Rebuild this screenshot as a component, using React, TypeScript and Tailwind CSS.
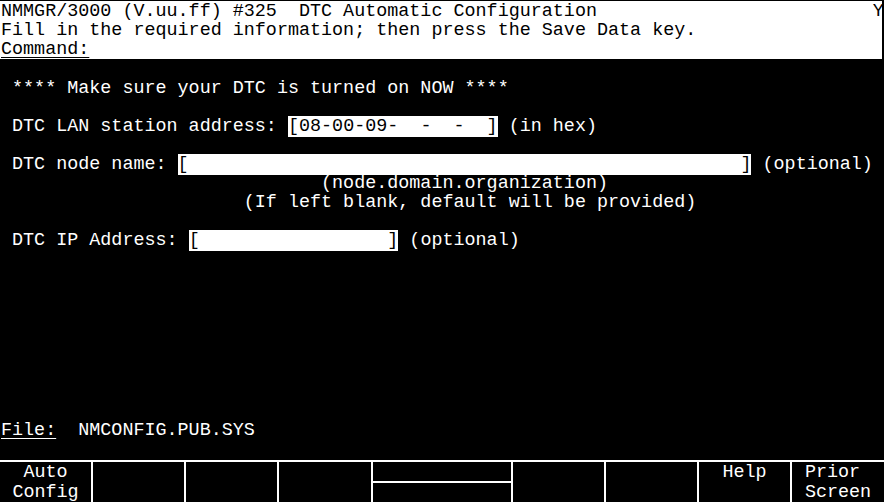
import React from 'react';

// 80 x 24 terminal grid: one column = 11.05px, one row = 19px
const Row = ({ children }: { children?: React.ReactNode }) => (
  <div className="h-[19px] leading-[19px] whitespace-pre">{children}</div>
);

const Field = ({ children }: { children: React.ReactNode }) => (
  <span className="bg-white text-black">{children}</span>
);

// widths include the 2px divider on the left of every key but the first
const softKeys = [
  { w: 'w-[91px]', lines: ['  Auto  ', ' Config '] },
  { w: 'w-[93px]', lines: [] },
  { w: 'w-[93px]', lines: [] },
  { w: 'w-[94px]', lines: [] },
  { w: 'w-[140px]', split: true, lines: [] },
  { w: 'w-[93px]', lines: [] },
  { w: 'w-[93px]', lines: [] },
  { w: 'w-[93px]', lines: ['  Help  '] },
  { w: 'w-[94px]', lines: [' Prior  ', ' Screen '] },
];

const App = () => {
  return (
    <main className="flex h-[502px] w-[884px] flex-col overflow-hidden bg-black text-white font-['Liberation_Mono',monospace] text-[18.4px]">
      {/* Header */}
      <section className="mt-[1px] w-[882px] bg-white pt-[1px] pl-[1px] text-black">
        <Row>{'NMMGR/3000 (V.uu.ff) #325  DTC Automatic Configuration                         Y'}</Row>
        <Row>Fill in the required information; then press the Save Data key.</Row>
        <Row>
          <span className="underline underline-offset-[3px]">Command:</span>
        </Row>
      </section>

      {/* Form body */}
      <section className="pt-[1px] pl-[1px]">
        <Row />
        <Row>{' **** Make sure your DTC is turned on NOW ****'}</Row>
        <Row />
        <Row>
          {' DTC LAN station address: '}
          <Field>{'[08-00-09-  -  -  ]'}</Field>
          {' (in hex)'}
        </Row>
        <Row />
        <Row>
          {' DTC node name: '}
          <Field>{'[' + ' '.repeat(50) + ']'}</Field>
          {' (optional)'}
        </Row>
        <Row>{' '.repeat(29) + '(node.domain.organization)'}</Row>
        <Row>{' '.repeat(22) + '(If left blank, default will be provided)'}</Row>
        <Row />
        <Row>
          {' DTC IP Address: '}
          <Field>{'[' + ' '.repeat(17) + ']'}</Field>
          {' (optional)'}
        </Row>
        <Row />
        <Row />
        <Row />
        <Row />
        <Row />
        <Row />
        <Row />
        <Row />
        <Row />
        <Row>
          <span className="underline underline-offset-[3px]">File:</span>
          {'  NMCONFIG.PUB.SYS'}
        </Row>
      </section>

      {/* Soft keys */}
      <footer className="mt-auto flex h-[42px] border-t-2 border-white">
        {softKeys.map((k, i) => (
          <div
            key={i}
            className={`${k.w} shrink-0 ${i > 0 ? 'border-l-2 border-white' : ''} flex flex-col`}
          >
            {k.split ? (
              <>
                <div className="h-[21px] border-b-2 border-white" />
                <div className="flex-1" />
              </>
            ) : (
              k.lines.map((l, j) => (
                <div key={j} className="h-[20px] pt-[1px] text-center leading-[20px] whitespace-pre">
                  {l}
                </div>
              ))
            )}
          </div>
        ))}
      </footer>
    </main>
  );
};

export default App;
